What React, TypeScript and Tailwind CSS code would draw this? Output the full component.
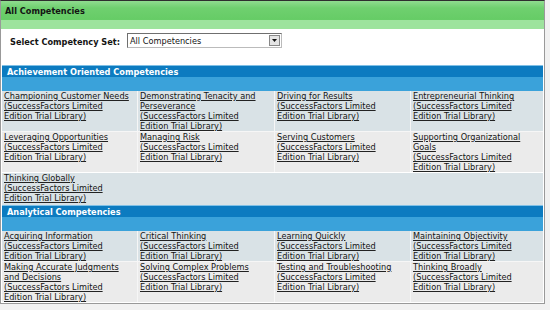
import React from "react";

const SUFFIX_A = "(SuccessFactors Limited";
const SUFFIX_B = "Edition Trial Library)";

type Row = string[][];

const achievement: Row[] = [
  [
    ["Championing Customer Needs", SUFFIX_A, SUFFIX_B],
    ["Demonstrating Tenacity and", "Perseverance", SUFFIX_A, SUFFIX_B],
    ["Driving for Results", SUFFIX_A, SUFFIX_B],
    ["Entrepreneurial Thinking", SUFFIX_A, SUFFIX_B],
  ],
  [
    ["Leveraging Opportunities", SUFFIX_A, SUFFIX_B],
    ["Managing Risk", SUFFIX_A, SUFFIX_B],
    ["Serving Customers", SUFFIX_A, SUFFIX_B],
    ["Supporting Organizational", "Goals", SUFFIX_A, SUFFIX_B],
  ],
];

const analytical: Row[] = [
  [
    ["Acquiring Information", SUFFIX_A, SUFFIX_B],
    ["Critical Thinking", SUFFIX_A, SUFFIX_B],
    ["Learning Quickly", SUFFIX_A, SUFFIX_B],
    ["Maintaining Objectivity", SUFFIX_A, SUFFIX_B],
  ],
  [
    ["Making Accurate Judgments", "and Decisions", SUFFIX_A, SUFFIX_B],
    ["Solving Complex Problems", SUFFIX_A, SUFFIX_B],
    ["Testing and Troubleshooting", SUFFIX_A, SUFFIX_B],
    ["Thinking Broadly", SUFFIX_A, SUFFIX_B],
  ],
];

function Lines({ lines }: { lines: string[] }) {
  return (
    <>
      {lines.map((l, i) => (
        <div key={i} className="whitespace-nowrap">
          <span className="underline underline-offset-[1px] decoration-[#222]">{l}</span>
        </div>
      ))}
    </>
  );
}

function SectionHeader({ title }: { title: string }) {
  return (
    <div className="flex flex-col">
      <div className="h-[1px] bg-[#7fc0e6]" />
      <div className="h-[11px] bg-[#0c7bc0] pl-[5px] pt-[1px] font-bold text-white leading-[11px]">{title}</div>
      <div className="h-[14px] bg-[#3aa2da]" />
    </div>
  );
}

function Grid({ rows }: { rows: Row[] }) {
  return (
    <div className="grid grid-cols-[135px_136px_135px_1fr] gap-px bg-[#f6f6f6]">
      {rows.map((row, ri) =>
        row.map((cell, ci) => (
          <div
            key={`${ri}-${ci}`}
            className={ri % 2 === 0 ? "bg-[#d9e2e6] pl-[2px]" : "bg-[#ebebeb] pl-[2px]"}
          >
            <Lines lines={cell} />
          </div>
        ))
      )}
    </div>
  );
}

export default function App() {
  return (
    <div className="w-[550px] h-[310px] bg-[#f1f1f1] font-['DejaVu_Sans',sans-serif] text-[8.2px] leading-[10px] text-[#141414]">
      <div className="w-[545px] h-[304px] border border-[#999] border-t-[#2e2e2e] bg-white overflow-hidden flex flex-col">
        {/* Green title bar */}
        <div className="h-[28px] bg-[linear-gradient(to_bottom,#8fdc8f_0%,#6fd06f_25%,#66cc66_66%,#9de39d_69%,#9de39d_100%)] pl-[4px] pt-[5px] font-bold text-[#141414]">
          All Competencies
        </div>

        {/* Select row */}
        <div className="h-[36px] flex items-start pt-[4px] pl-[9px] gap-[7px]">
          <div className="h-[15px] flex items-center font-bold text-[#141414] pt-[2px]">Select Competency Set:</div>
          <div className="w-[155px] h-[15px] border border-[#6f6f6f] border-r-[#bbb] border-b-[#bbb] bg-white flex items-center">
            <div className="flex-1 pl-[2px] text-[#141414]">All Competencies</div>
            <div className="w-[11px] h-[11px] mr-[1px] bg-[#e4e4e4] border border-[#888] flex items-center justify-center">
              <svg width="5" height="3" viewBox="0 0 5 3">
                <path d="M0 0 L5 0 L2.5 3 Z" fill="#111" />
              </svg>
            </div>
          </div>
        </div>

        {/* Sections */}
        <div className="ml-[1px] w-[541px] flex flex-col">
          <SectionHeader title="Achievement Oriented Competencies" />
          <Grid rows={achievement} />
          <div className="mt-px bg-[#d9e2e6] pl-[2px] pb-[2px]">
            <Lines lines={["Thinking Globally", SUFFIX_A, SUFFIX_B]} />
          </div>
          <SectionHeader title="Analytical Competencies" />
          <Grid rows={analytical} />
        </div>
      </div>
    </div>
  );
}
